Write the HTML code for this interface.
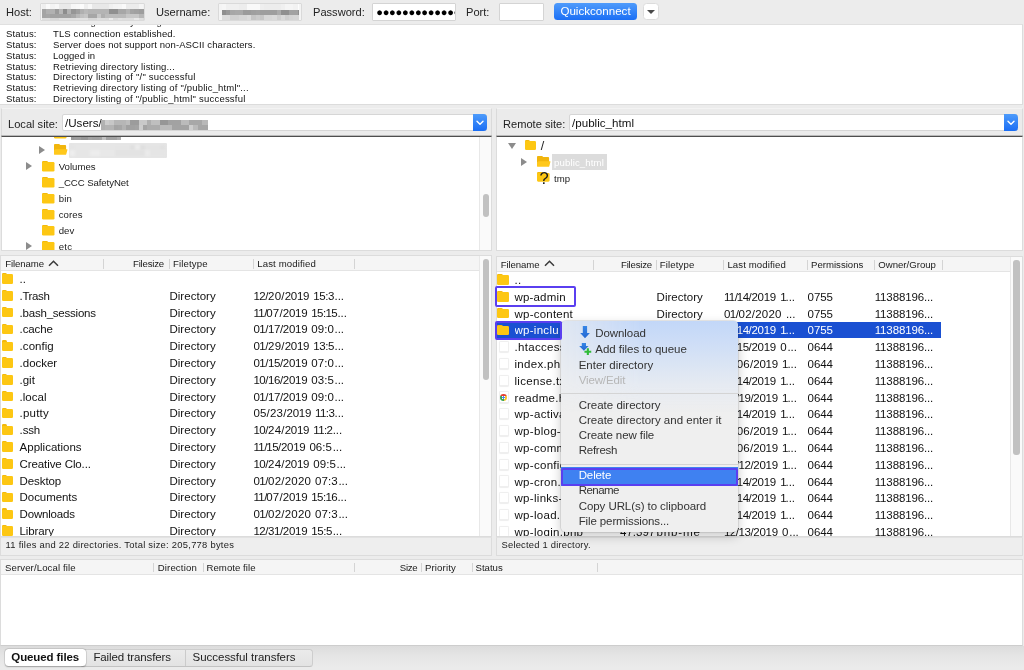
<!DOCTYPE html>
<html><head><meta charset="utf-8"><title>FileZilla</title>
<style>
*{box-sizing:border-box;margin:0;padding:0}
html,body{width:1024px;height:670px;overflow:hidden;background:#ececec;font-family:"Liberation Sans",sans-serif;color:#1c1c1c}
.abs{position:absolute}
div,span{position:absolute;white-space:pre}
.lbl{font-size:11.1px;line-height:14px;color:#222}
.inp{background:#fff;border:1px solid #d4d4d4;border-radius:1px}
.log{font-size:9.5px;line-height:11px;color:#111}
.white{background:#fff}
.tree{font-size:9.6px;line-height:12px;color:#1a1a1a}
.fold{width:11.5px;height:10.5px}
.fold:before{content:"";position:absolute;left:0;top:0;width:5.5px;height:4px;background:#f3b90b;border-radius:1.2px 1.5px 0 0}
.fold:after{content:"";position:absolute;left:0;top:1.2px;width:11.5px;height:9.3px;background:#fdc713;border-radius:0.8px 1.2px 1.2px 1.2px}
.hdr{font-size:9.6px;line-height:12px;color:#1a1a1a}
.row{font-size:11.5px;line-height:14px;color:#111}
.sep{width:1px;background:#d4d4d4}
.st{font-size:9.4px;line-height:12px;color:#222}
.file{width:9.6px;height:11.2px;background:#fff;border:1px solid #efefef;border-radius:1.5px;box-shadow:0 0.5px 1px rgba(0,0,0,.07)}
.mi{font-size:11.5px;line-height:14px;color:#333}
.tab{font-size:11.5px;line-height:14px;color:#222}
</style></head><body>
<div id="app" style="left:0;top:0;width:1024px;height:670px;will-change:transform;filter:blur(0.3px)">

<span class="lbl" style="left:6px;top:5px">Host:</span>
<div class="inp" style="left:40px;top:3px;width:105px;height:18px;background:#f4f4f4;border-color:#dadada"></div>
<div style="left:42.0px;top:4.0px;width:101.5px;height:5.3px;background:linear-gradient(90deg,#efefef 0.0px 4.2px,#fafafa 4.2px 8.4px,#f3f3f3 8.4px 12.6px,#f7f7f7 12.6px 16.8px,#eaeaea 16.8px 21.0px,#eaeaea 21.0px 25.2px,#eaeaea 25.2px 29.4px,#f7f7f7 29.4px 33.6px,#f9f9f9 33.6px 37.8px,#fcfcfc 37.8px 42.0px,#efefef 42.0px 46.2px,#f8f8f8 46.2px 50.4px,#e8e8e8 50.4px 54.6px,#e8e8e8 54.6px 58.8px,#e8e8e8 58.8px 63.0px,#e8e8e8 63.0px 67.2px,#f0f0f0 67.2px 71.4px,#f4f4f4 71.4px 75.6px,#f5f5f5 75.6px 79.8px,#fafafa 79.8px 84.0px,#ececec 84.0px 88.2px,#ececec 88.2px 92.4px,#ececec 92.4px 96.6px,#f5f5f5 96.6px 100.8px,#f1f1f1 100.8px 101.5px);filter:blur(0.5px)"></div><div style="left:42.0px;top:9.0px;width:101.5px;height:4.9px;background:linear-gradient(90deg,#a4a4a4 0.0px 4.2px,#b0b0b0 4.2px 8.4px,#b1b1b1 8.4px 12.6px,#9a9a9a 12.6px 16.8px,#b7b7b7 16.8px 21.0px,#8d8d8d 21.0px 25.2px,#b2b2b2 25.2px 29.4px,#969696 29.4px 33.6px,#a0a0a0 33.6px 37.8px,#b0b0b0 37.8px 42.0px,#b9b9b9 42.0px 46.2px,#b4b4b4 46.2px 50.4px,#b4b4b4 50.4px 54.6px,#b4b4b4 54.6px 58.8px,#b4b4b4 58.8px 63.0px,#b4b4b4 63.0px 67.2px,#909090 67.2px 71.4px,#909090 71.4px 75.6px,#a7a7a7 75.6px 79.8px,#a7a7a7 79.8px 84.0px,#b3b3b3 84.0px 88.2px,#a4a4a4 88.2px 92.4px,#a1a1a1 92.4px 96.6px,#9d9d9d 96.6px 100.8px,#9d9d9d 100.8px 101.5px);filter:blur(0.5px)"></div><div style="left:42.0px;top:13.6px;width:101.5px;height:4.9px;background:linear-gradient(90deg,#a4a4a4 0.0px 4.2px,#a6a6a6 4.2px 8.4px,#a2a2a2 8.4px 12.6px,#a2a2a2 12.6px 16.8px,#a2a2a2 16.8px 21.0px,#a2a2a2 21.0px 25.2px,#a2a2a2 25.2px 29.4px,#a8a8a8 29.4px 33.6px,#b8b8b8 33.6px 37.8px,#c1c1c1 37.8px 42.0px,#c6c6c6 42.0px 46.2px,#a6a6a6 46.2px 50.4px,#a6a6a6 50.4px 54.6px,#c8c8c8 54.6px 58.8px,#afafaf 58.8px 63.0px,#bbbbbb 63.0px 67.2px,#bbbbbb 67.2px 71.4px,#bbbbbb 71.4px 75.6px,#bababa 75.6px 79.8px,#bababa 79.8px 84.0px,#c7c7c7 84.0px 88.2px,#c7c7c7 88.2px 92.4px,#c7c7c7 92.4px 96.6px,#b6b6b6 96.6px 100.8px,#b6b6b6 100.8px 101.5px);filter:blur(0.5px)"></div><div style="left:42.0px;top:18.2px;width:101.5px;height:1.8px;background:linear-gradient(90deg,#dfdfdf 0.0px 4.2px,#dfdfdf 4.2px 8.4px,#d8d8d8 8.4px 12.6px,#d7d7d7 12.6px 16.8px,#dfdfdf 16.8px 21.0px,#e0e0e0 21.0px 25.2px,#e0e0e0 25.2px 29.4px,#e0e0e0 29.4px 33.6px,#e2e2e2 33.6px 37.8px,#e2e2e2 37.8px 42.0px,#e2e2e2 42.0px 46.2px,#d7d7d7 46.2px 50.4px,#d7d7d7 50.4px 54.6px,#dedede 54.6px 58.8px,#dedede 58.8px 63.0px,#dcdcdc 63.0px 67.2px,#ebebeb 67.2px 71.4px,#dadada 71.4px 75.6px,#e1e1e1 75.6px 79.8px,#dedede 79.8px 84.0px,#dedede 84.0px 88.2px,#dedede 88.2px 92.4px,#e9e9e9 92.4px 96.6px,#dedede 96.6px 100.8px,#d8d8d8 100.8px 101.5px);filter:blur(0.5px)"></div>
<span class="lbl" style="left:156px;top:5px">Username:</span>
<div class="inp" style="left:218px;top:3px;width:84px;height:18px;background:#f4f4f4;border-color:#dadada"></div>
<div style="left:221.5px;top:4.0px;width:77.0px;height:5.8px;background:linear-gradient(90deg,#f6f6f6 0.0px 4.2px,#f0f0f0 4.2px 8.4px,#f0f0f0 8.4px 12.6px,#f0f0f0 12.6px 16.8px,#ededed 16.8px 21.0px,#ededed 21.0px 25.2px,#f9f9f9 25.2px 29.4px,#f9f9f9 29.4px 33.6px,#f9f9f9 33.6px 37.8px,#efefef 37.8px 42.0px,#ededed 42.0px 46.2px,#ededed 46.2px 50.4px,#ededed 50.4px 54.6px,#ededed 54.6px 58.8px,#f0f0f0 58.8px 63.0px,#f5f5f5 63.0px 67.2px,#f5f5f5 67.2px 71.4px,#f2f2f2 71.4px 75.6px,#fdfdfd 75.6px 77.0px);filter:blur(0.5px)"></div><div style="left:221.5px;top:9.5px;width:77.0px;height:5.5px;background:linear-gradient(90deg,#8f8f8f 0.0px 4.2px,#999999 4.2px 8.4px,#a7a7a7 8.4px 12.6px,#a9a9a9 12.6px 16.8px,#a9a9a9 16.8px 21.0px,#9b9b9b 21.0px 25.2px,#9b9b9b 25.2px 29.4px,#9f9f9f 29.4px 33.6px,#a1a1a1 33.6px 37.8px,#9e9e9e 37.8px 42.0px,#9e9e9e 42.0px 46.2px,#9e9e9e 46.2px 50.4px,#9e9e9e 50.4px 54.6px,#ababab 54.6px 58.8px,#909090 58.8px 63.0px,#909090 63.0px 67.2px,#a2a2a2 67.2px 71.4px,#a2a2a2 71.4px 75.6px,#919191 75.6px 77.0px);filter:blur(0.5px)"></div><div style="left:221.5px;top:14.7px;width:77.0px;height:5.1px;background:linear-gradient(90deg,#dcdcdc 0.0px 4.2px,#dcdcdc 4.2px 8.4px,#d1d1d1 8.4px 12.6px,#d1d1d1 12.6px 16.8px,#d6d6d6 16.8px 21.0px,#d6d6d6 21.0px 25.2px,#dbdbdb 25.2px 29.4px,#c5c5c5 29.4px 33.6px,#cbcbcb 33.6px 37.8px,#c6c6c6 37.8px 42.0px,#d7d7d7 42.0px 46.2px,#d7d7d7 46.2px 50.4px,#dadada 50.4px 54.6px,#cfcfcf 54.6px 58.8px,#d9d9d9 58.8px 63.0px,#cfcfcf 63.0px 67.2px,#d4d4d4 67.2px 71.4px,#d6d6d6 71.4px 75.6px,#d6d6d6 75.6px 77.0px);filter:blur(0.5px)"></div>
<span class="lbl" style="left:313px;top:5px">Password:</span>
<div class="inp" style="left:372px;top:3px;width:84px;height:18px;overflow:hidden"><span style="left:3.2px;top:-1.2px;font-size:11.1px;line-height:18px;letter-spacing:-0.25px;color:#000">●●●●●●●●●●●●●●</span></div>
<span class="lbl" style="left:466px;top:5px">Port:</span>
<div class="inp" style="left:499px;top:3px;width:45px;height:18px"></div>
<div style="left:554px;top:3px;width:83px;height:17px;border-radius:3.5px;background:linear-gradient(#4f9bfb,#1b6ff5);color:#fff;font-size:11.6px;line-height:16px;text-align:center">Quickconnect</div>
<div style="left:643px;top:3px;width:15.5px;height:17px;border-radius:3.5px;background:#fff;border:1px solid #dcdcdc"><span style="left:2.8px;top:5.8px;width:0;height:0;border-left:4px solid transparent;border-right:4px solid transparent;border-top:4.2px solid #4a4a4a"></span></div>
<div class="white" style="left:0;top:24px;width:1023px;height:81px;border:1px solid #dcdcdc;border-top:1.5px solid #e0e0e0;border-left:none;overflow:hidden">
<span class="log" style="left:6px;top:-8.9px">Status:</span><span class="log" style="left:53px;top:-8.9px">Retrieving directory listing...</span>
<span class="log" style="left:6px;top:3.00px;letter-spacing:0.146px">Status:</span><span class="log" style="left:53px;top:3.00px;letter-spacing:0.116px">TLS connection established.</span>
<span class="log" style="left:6px;top:13.86px;letter-spacing:0.146px">Status:</span><span class="log" style="left:53px;top:13.86px;letter-spacing:0.111px">Server does not support non-ASCII characters.</span>
<span class="log" style="left:6px;top:24.72px;letter-spacing:0.146px">Status:</span><span class="log" style="left:53px;top:24.72px;letter-spacing:0.052px">Logged in</span>
<span class="log" style="left:6px;top:35.58px;letter-spacing:0.146px">Status:</span><span class="log" style="left:53px;top:35.58px;letter-spacing:0.171px">Retrieving directory listing...</span>
<span class="log" style="left:6px;top:46.44px;letter-spacing:0.146px">Status:</span><span class="log" style="left:53px;top:46.44px;letter-spacing:0.228px">Directory listing of &quot;/&quot; successful</span>
<span class="log" style="left:6px;top:57.30px;letter-spacing:0.146px">Status:</span><span class="log" style="left:53px;top:57.30px;letter-spacing:0.171px">Retrieving directory listing of &quot;/public_html&quot;...</span>
<span class="log" style="left:6px;top:68.16px;letter-spacing:0.146px">Status:</span><span class="log" style="left:53px;top:68.16px;letter-spacing:0.216px">Directory listing of &quot;/public_html&quot; successful</span>
</div>
<div style="left:1px;top:107.8px;width:491px;height:28.2px;background:#ebebeb;border:1px solid #dadada;border-top:1.2px solid #f3f3f3;border-bottom:none"></div>
<span class="lbl" style="left:8px;top:116.5px">Local site:</span>
<div class="inp" style="left:62px;top:114.2px;width:425px;height:16.6px;border-radius:2px;border-color:#d6d6d6"></div>
<span class="lbl" style="left:65px;top:116px;font-size:11.6px;color:#111">/Users/</span>
<div style="left:101.4px;top:119.8px;width:107.0px;height:5.0px;background:linear-gradient(90deg,#b2b2b2 0.0px 4.2px,#cdcdcd 4.2px 8.4px,#c7c7c7 8.4px 12.6px,#b6b6b6 12.6px 16.8px,#b6b6b6 16.8px 21.0px,#b6b6b6 21.0px 25.2px,#bdbdbd 25.2px 29.4px,#9c9c9c 29.4px 33.6px,#9c9c9c 33.6px 37.8px,#c9c9c9 37.8px 42.0px,#c9c9c9 42.0px 46.2px,#afafaf 46.2px 50.4px,#bfbfbf 50.4px 54.6px,#bfbfbf 54.6px 58.8px,#969696 58.8px 63.0px,#969696 63.0px 67.2px,#a2a2a2 67.2px 71.4px,#a2a2a2 71.4px 75.6px,#a2a2a2 75.6px 79.8px,#bbbbbb 79.8px 84.0px,#bbbbbb 84.0px 88.2px,#a8a8a8 88.2px 92.4px,#a8a8a8 92.4px 96.6px,#a8a8a8 96.6px 100.8px,#b9b9b9 100.8px 105.0px,#b9b9b9 105.0px 107.0px);filter:blur(0.5px)"></div><div style="left:101.4px;top:124.5px;width:107.0px;height:5.0px;background:linear-gradient(90deg,#b0b0b0 0.0px 4.2px,#b4b4b4 4.2px 8.4px,#b4b4b4 8.4px 12.6px,#a4a4a4 12.6px 16.8px,#a6a6a6 16.8px 21.0px,#b2b2b2 21.0px 25.2px,#a1a1a1 25.2px 29.4px,#a1a1a1 29.4px 33.6px,#a3a3a3 33.6px 37.8px,#cdcdcd 37.8px 42.0px,#a4a4a4 42.0px 46.2px,#acacac 46.2px 50.4px,#acacac 50.4px 54.6px,#acacac 54.6px 58.8px,#bababa 58.8px 63.0px,#bababa 63.0px 67.2px,#bababa 67.2px 71.4px,#a3a3a3 71.4px 75.6px,#a3a3a3 75.6px 79.8px,#a3a3a3 79.8px 84.0px,#a3a3a3 84.0px 88.2px,#cecece 88.2px 92.4px,#bababa 92.4px 96.6px,#a7a7a7 96.6px 100.8px,#a7a7a7 100.8px 105.0px,#a7a7a7 105.0px 107.0px);filter:blur(0.5px)"></div>
<div style="left:472.5px;top:114.2px;width:14.5px;height:16.6px;border-radius:0 3.5px 3.5px 0;background:linear-gradient(#4d9bfb,#1a6df4)"><svg class="abs" style="left:3.5px;top:5.6px" width="8" height="6" viewBox="0 0 8 6"><path d="M1 1.2 L4 4.2 L7 1.2" fill="none" stroke="#fff" stroke-width="1.4" stroke-linecap="round" stroke-linejoin="round"/></svg></div>
<div style="left:496px;top:107.8px;width:527px;height:28.2px;background:#ebebeb;border:1px solid #dadada;border-top:1.2px solid #f3f3f3;border-bottom:none"></div>
<span class="lbl" style="left:503px;top:116.5px">Remote site:</span>
<div class="inp" style="left:569px;top:114.2px;width:449px;height:16.6px;border-radius:2px;border-color:#d6d6d6"></div>
<span class="lbl" style="left:572px;top:116px;font-size:11.6px;color:#111;letter-spacing:0.010px">/public_html</span>
<div style="left:1003.5px;top:114.2px;width:14.5px;height:16.6px;border-radius:0 3.5px 3.5px 0;background:linear-gradient(#4d9bfb,#1a6df4)"><svg class="abs" style="left:3.5px;top:5.6px" width="8" height="6" viewBox="0 0 8 6"><path d="M1 1.2 L4 4.2 L7 1.2" fill="none" stroke="#fff" stroke-width="1.4" stroke-linecap="round" stroke-linejoin="round"/></svg></div>
<div class="white" style="left:1px;top:136px;width:491px;height:114.5px;border:1px solid #dcdcdc;border-top:1px solid #4e4e4e;box-shadow:0 -1px 0 #b9b9b9;overflow:hidden">
<div class="fold" style="left:52px;top:-9.0px;transform:scale(1.04,1.05);transform-origin:0 0"></div>
<div style="left:69.0px;top:-2.2px;width:50.0px;height:2.7px;background:linear-gradient(90deg,#9f9f9f 0.0px 3.5px,#888888 3.5px 7.0px,#aaaaaa 7.0px 10.5px,#adadad 10.5px 14.0px,#adadad 14.0px 17.5px,#959595 17.5px 21.0px,#878787 21.0px 24.5px,#878787 24.5px 28.0px,#969696 28.0px 31.5px,#909090 31.5px 35.0px,#909090 35.0px 38.5px,#909090 38.5px 42.0px,#909090 42.0px 45.5px,#afafaf 45.5px 49.0px,#828282 49.0px 50.0px);filter:blur(0.6px)"></div><div style="left:69.0px;top:0.2px;width:50.0px;height:2.7px;background:linear-gradient(90deg,#9a9a9a 0.0px 3.5px,#9e9e9e 3.5px 7.0px,#9e9e9e 7.0px 10.5px,#969696 10.5px 14.0px,#969696 14.0px 17.5px,#a3a3a3 17.5px 21.0px,#a0a0a0 21.0px 24.5px,#a0a0a0 24.5px 28.0px,#a2a2a2 28.0px 31.5px,#c1c1c1 31.5px 35.0px,#a1a1a1 35.0px 38.5px,#a1a1a1 38.5px 42.0px,#a1a1a1 42.0px 45.5px,#adadad 45.5px 49.0px,#adadad 49.0px 50.0px);filter:blur(0.6px)"></div>
<span style="left:37px;top:8.800000000000011px;width:0;height:0;border-top:4.2px solid transparent;border-bottom:4.2px solid transparent;border-left:6.5px solid #8c8c8c"></span>
<svg class="abs" style="left:52.3px;top:7.300000000000011px" width="14" height="11" viewBox="0 0 14 11"><path d="M0.9 0h4.2l1.2 1.1h4.9a0.9 0.9 0 0 1 .9 .9v5.5H0V0.9A0.9 0.9 0 0 1 .9 0z" fill="#f1b50c"/><path d="M1.6 5.2h11.4a.5 .5 0 0 1 .45 .65l-1.2 4.3a.9 .9 0 0 1-.85 .65H0.9A0.9 .9 0 0 1 0 9.9V6.3z" fill="#ffc81b"/></svg>
<div style="left:66.9px;top:5.5px;width:97.8px;height:15.1px;background:#e6e6e6;border-radius:1px"></div>
<div style="left:68.0px;top:7.5px;width:95.0px;height:5.8px;background:linear-gradient(90deg,#e5e5e5 0.0px 5.0px,#e7e7e7 5.0px 10.0px,#e7e7e7 10.0px 15.0px,#e7e7e7 15.0px 20.0px,#e6e6e6 20.0px 25.0px,#e6e6e6 25.0px 30.0px,#e6e6e6 30.0px 35.0px,#e6e6e6 35.0px 40.0px,#e6e6e6 40.0px 45.0px,#e5e5e5 45.0px 50.0px,#e5e5e5 50.0px 55.0px,#e5e5e5 55.0px 60.0px,#e0e0e0 60.0px 65.0px,#ececec 65.0px 70.0px,#dfdfdf 70.0px 75.0px,#e4e4e4 75.0px 80.0px,#e4e4e4 80.0px 85.0px,#e4e4e4 85.0px 90.0px,#e1e1e1 90.0px 95.0px,#e4e4e4 95.0px 95.0px);filter:blur(0.8px)"></div><div style="left:68.0px;top:13.0px;width:95.0px;height:5.8px;background:linear-gradient(90deg,#eeeeee 0.0px 5.0px,#e6e6e6 5.0px 10.0px,#e6e6e6 10.0px 15.0px,#e6e6e6 15.0px 20.0px,#ededed 20.0px 25.0px,#ededed 25.0px 30.0px,#e8e8e8 30.0px 35.0px,#e8e8e8 35.0px 40.0px,#e8e8e8 40.0px 45.0px,#e3e3e3 45.0px 50.0px,#e3e3e3 50.0px 55.0px,#e3e3e3 55.0px 60.0px,#e3e3e3 60.0px 65.0px,#e3e3e3 65.0px 70.0px,#e2e2e2 70.0px 75.0px,#ebebeb 75.0px 80.0px,#e5e5e5 80.0px 85.0px,#e5e5e5 85.0px 90.0px,#e5e5e5 90.0px 95.0px,#e5e5e5 95.0px 95.0px);filter:blur(0.8px)"></div>
<span style="left:24.3px;top:25.099999999999994px;width:0;height:0;border-top:4.2px solid transparent;border-bottom:4.2px solid transparent;border-left:6.5px solid #8c8c8c"></span>
<div class="fold" style="left:40px;top:23.80000000000001px;transform:scale(1.04,1.05);transform-origin:0 0"></div>
<span class="tree" style="left:56.7px;top:24.30000000000001px;letter-spacing:0.029px">Volumes</span>
<div class="fold" style="left:40px;top:39.80000000000001px;transform:scale(1.04,1.05);transform-origin:0 0"></div>
<span class="tree" style="left:56.7px;top:40.30000000000001px;letter-spacing:-0.066px">_CCC SafetyNet</span>
<div class="fold" style="left:40px;top:55.80000000000001px;transform:scale(1.04,1.05);transform-origin:0 0"></div>
<span class="tree" style="left:56.7px;top:56.30000000000001px;letter-spacing:0.229px">bin</span>
<div class="fold" style="left:40px;top:71.80000000000001px;transform:scale(1.04,1.05);transform-origin:0 0"></div>
<span class="tree" style="left:56.7px;top:72.30000000000001px;letter-spacing:0.106px">cores</span>
<div class="fold" style="left:40px;top:87.80000000000001px;transform:scale(1.04,1.05);transform-origin:0 0"></div>
<span class="tree" style="left:56.7px;top:88.30000000000001px;letter-spacing:0.010px">dev</span>
<span style="left:24.3px;top:105.1px;width:0;height:0;border-top:4.2px solid transparent;border-bottom:4.2px solid transparent;border-left:6.5px solid #8c8c8c"></span>
<div class="fold" style="left:40px;top:103.80000000000001px;transform:scale(1.04,1.05);transform-origin:0 0"></div>
<span class="tree" style="left:56.7px;top:104.30000000000001px;letter-spacing:0.229px">etc</span>
<div style="left:477px;top:0;width:12px;height:115px;background:#fafafa;border-left:1px solid #e8e8e8"></div>
<div style="left:480.5px;top:57.0px;width:6px;height:23px;border-radius:3px;background:#c1c1c1"></div>
</div>
<div class="white" style="left:496px;top:136px;width:527px;height:114.5px;border:1px solid #dcdcdc;border-top:1px solid #4e4e4e;box-shadow:0 -1px 0 #b9b9b9;overflow:hidden">
<span style="left:10.800000000000011px;top:6.400000000000006px;width:0;height:0;border-left:4px solid transparent;border-right:4px solid transparent;border-top:6.2px solid #8c8c8c"></span>
<div class="fold" style="left:27.700000000000045px;top:3.0px"></div>
<span class="tree" style="left:43.799999999999955px;top:3.4000000000000057px;font-size:12.5px">/</span>
<span style="left:24.200000000000045px;top:21.099999999999994px;width:0;height:0;border-top:4.2px solid transparent;border-bottom:4.2px solid transparent;border-left:6.5px solid #8c8c8c"></span>
<svg class="abs" style="left:40px;top:18.599999999999994px" width="14" height="11" viewBox="0 0 14 11"><path d="M0.9 0h4.2l1.2 1.1h4.9a0.9 0.9 0 0 1 .9 .9v5.5H0V0.9A0.9 0.9 0 0 1 .9 0z" fill="#f1b50c"/><path d="M1.6 5.2h11.4a.5 .5 0 0 1 .45 .65l-1.2 4.3a.9 .9 0 0 1-.85 .65H0.9A0.9 .9 0 0 1 0 9.9V6.3z" fill="#ffc81b"/></svg>
<div style="left:55px;top:17.0px;width:55px;height:15.5px;background:#dcdcdc"></div><span class="tree" style="left:57px;top:19.80000000000001px;color:#fff;letter-spacing:0.134px">public_html</span>
<div class="fold" style="left:40px;top:35.099999999999994px;transform:scale(1.05,0.97);transform-origin:0 0"></div>
<span style="left:42.5px;top:32.650000000000006px;font-size:16.5px;line-height:16px;color:#1a1a1a">?</span>
<span class="tree" style="left:57px;top:36.30000000000001px">tmp</span>
</div>
<div class="white" style="left:0px;top:255.2px;width:492px;height:282.3px;border:1px solid #dcdcdc;overflow:hidden">
<div style="left:0;top:0;width:600px;height:14.6px;background:#f5f5f5;border-bottom:1px solid #e4e4e4"></div>
<span class="hdr" style="left:4.2px;top:1.8px;letter-spacing:-0.084px">Filename</span>
<span class="hdr" style="left:132px;top:1.8px;letter-spacing:-0.191px">Filesize</span>
<span class="hdr" style="left:172px;top:1.8px;letter-spacing:0.138px">Filetype</span>
<span class="hdr" style="left:256.3px;top:1.8px;letter-spacing:0.118px">Last modified</span>
<div class="sep" style="left:101.5px;top:2.5px;height:10px"></div>
<div class="sep" style="left:168px;top:2.5px;height:10px"></div>
<div class="sep" style="left:252px;top:2.5px;height:10px"></div>
<div class="sep" style="left:353px;top:2.5px;height:10px"></div>
<svg class="abs" style="left:46.7px;top:3.8000000000000114px" width="11" height="7" viewBox="0 0 11 7"><path d="M1 5.8 L5.5 1.2 L10 5.8" fill="none" stroke="#3a3a3a" stroke-width="1.5"/></svg>
<div class="fold" style="left:0.8px;top:17.10px"></div>
<span class="row" style="left:18.6px;top:15.75px">..</span>
<div class="fold" style="left:0.8px;top:33.90px"></div>
<span class="row" style="left:18.6px;top:32.55px;letter-spacing:-0.395px">.Trash</span>
<span class="row" style="left:168.4px;top:32.55px;letter-spacing:0.043px">Directory</span><span class="row" style="left:252.40px;top:32.55px;color:#111;letter-spacing:-0.433px">12/</span><span class="row" style="left:267.10px;top:32.55px;color:#111;letter-spacing:0.200px">20/</span><span class="row" style="left:283.70px;top:32.55px;color:#111;letter-spacing:-0.273px">2019</span><span class="row" style="left:312.20px;top:32.55px;color:#111;letter-spacing:-0.398px">15:3</span><span class="row" style="left:333.60px;top:32.55px;color:#111;letter-spacing:-0.068px">...</span>
<div class="fold" style="left:0.8px;top:50.70px"></div>
<span class="row" style="left:18.6px;top:49.35px;letter-spacing:-0.220px">.bash_sessions</span>
<span class="row" style="left:168.4px;top:49.35px;letter-spacing:0.043px">Directory</span><span class="row" style="left:252.40px;top:49.35px;color:#111;letter-spacing:-0.600px">11/</span><span class="row" style="left:265.20px;top:49.35px;color:#111;letter-spacing:0.200px">07/</span><span class="row" style="left:281.80px;top:49.35px;color:#111;letter-spacing:-0.273px">2019</span><span class="row" style="left:310.30px;top:49.35px;color:#111;letter-spacing:-0.600px">15:15</span><span class="row" style="left:336.40px;top:49.35px;color:#111;letter-spacing:-0.068px">...</span>
<div class="fold" style="left:0.8px;top:67.50px"></div>
<span class="row" style="left:18.6px;top:66.15px;letter-spacing:-0.115px">.cache</span>
<span class="row" style="left:168.4px;top:66.15px;letter-spacing:0.043px">Directory</span><span class="row" style="left:252.40px;top:66.15px;color:#111;letter-spacing:-0.433px">01/</span><span class="row" style="left:267.10px;top:66.15px;color:#111;letter-spacing:-0.433px">17/</span><span class="row" style="left:281.80px;top:66.15px;color:#111;letter-spacing:-0.273px">2019</span><span class="row" style="left:310.30px;top:66.15px;color:#111;letter-spacing:0.077px">09:0</span><span class="row" style="left:333.60px;top:66.15px;color:#111;letter-spacing:-0.068px">...</span>
<div class="fold" style="left:0.8px;top:84.30px"></div>
<span class="row" style="left:18.6px;top:82.95px;letter-spacing:0.044px">.config</span>
<span class="row" style="left:168.4px;top:82.95px;letter-spacing:0.043px">Directory</span><span class="row" style="left:252.40px;top:82.95px;color:#111;letter-spacing:-0.433px">01/</span><span class="row" style="left:267.10px;top:82.95px;color:#111;letter-spacing:0.200px">29/</span><span class="row" style="left:283.70px;top:82.95px;color:#111;letter-spacing:-0.273px">2019</span><span class="row" style="left:312.20px;top:82.95px;color:#111;letter-spacing:-0.398px">13:5</span><span class="row" style="left:333.60px;top:82.95px;color:#111;letter-spacing:-0.068px">...</span>
<div class="fold" style="left:0.8px;top:101.10px"></div>
<span class="row" style="left:18.6px;top:99.75px;letter-spacing:-0.017px">.docker</span>
<span class="row" style="left:168.4px;top:99.75px;letter-spacing:0.043px">Directory</span><span class="row" style="left:252.40px;top:99.75px;color:#111;letter-spacing:-0.433px">01/</span><span class="row" style="left:267.10px;top:99.75px;color:#111;letter-spacing:-0.433px">15/</span><span class="row" style="left:281.80px;top:99.75px;color:#111;letter-spacing:-0.273px">2019</span><span class="row" style="left:310.30px;top:99.75px;color:#111;letter-spacing:0.077px">07:0</span><span class="row" style="left:333.60px;top:99.75px;color:#111;letter-spacing:-0.068px">...</span>
<div class="fold" style="left:0.8px;top:117.90px"></div>
<span class="row" style="left:18.6px;top:116.55px;letter-spacing:-0.036px">.git</span>
<span class="row" style="left:168.4px;top:116.55px;letter-spacing:0.043px">Directory</span><span class="row" style="left:252.40px;top:116.55px;color:#111;letter-spacing:-0.433px">10/</span><span class="row" style="left:267.10px;top:116.55px;color:#111;letter-spacing:-0.433px">16/</span><span class="row" style="left:281.80px;top:116.55px;color:#111;letter-spacing:-0.273px">2019</span><span class="row" style="left:310.30px;top:116.55px;color:#111;letter-spacing:0.077px">03:5</span><span class="row" style="left:333.60px;top:116.55px;color:#111;letter-spacing:-0.068px">...</span>
<div class="fold" style="left:0.8px;top:134.70px"></div>
<span class="row" style="left:18.6px;top:133.35px;letter-spacing:0.007px">.local</span>
<span class="row" style="left:168.4px;top:133.35px;letter-spacing:0.043px">Directory</span><span class="row" style="left:252.40px;top:133.35px;color:#111;letter-spacing:-0.433px">01/</span><span class="row" style="left:267.10px;top:133.35px;color:#111;letter-spacing:-0.433px">17/</span><span class="row" style="left:281.80px;top:133.35px;color:#111;letter-spacing:-0.273px">2019</span><span class="row" style="left:310.30px;top:133.35px;color:#111;letter-spacing:0.077px">09:0</span><span class="row" style="left:333.60px;top:133.35px;color:#111;letter-spacing:-0.068px">...</span>
<div class="fold" style="left:0.8px;top:151.50px"></div>
<span class="row" style="left:18.6px;top:150.15px;letter-spacing:0.193px">.putty</span>
<span class="row" style="left:168.4px;top:150.15px;letter-spacing:0.043px">Directory</span><span class="row" style="left:252.40px;top:150.15px;color:#111;letter-spacing:0.200px">05/</span><span class="row" style="left:269.00px;top:150.15px;color:#111;letter-spacing:0.200px">23/</span><span class="row" style="left:285.60px;top:150.15px;color:#111;letter-spacing:-0.273px">2019</span><span class="row" style="left:314.10px;top:150.15px;color:#111;letter-spacing:-0.600px">11:3</span><span class="row" style="left:333.60px;top:150.15px;color:#111;letter-spacing:-0.068px">...</span>
<div class="fold" style="left:0.8px;top:168.30px"></div>
<span class="row" style="left:18.6px;top:166.95px;letter-spacing:-0.148px">.ssh</span>
<span class="row" style="left:168.4px;top:166.95px;letter-spacing:0.043px">Directory</span><span class="row" style="left:252.40px;top:166.95px;color:#111;letter-spacing:-0.433px">10/</span><span class="row" style="left:267.10px;top:166.95px;color:#111;letter-spacing:0.200px">24/</span><span class="row" style="left:283.70px;top:166.95px;color:#111;letter-spacing:-0.273px">2019</span><span class="row" style="left:312.20px;top:166.95px;color:#111;letter-spacing:-0.600px">11:2</span><span class="row" style="left:331.70px;top:166.95px;color:#111;letter-spacing:-0.068px">...</span>
<div class="fold" style="left:0.8px;top:185.10px"></div>
<span class="row" style="left:18.6px;top:183.75px;letter-spacing:-0.001px">Applications</span>
<span class="row" style="left:168.4px;top:183.75px;letter-spacing:0.043px">Directory</span><span class="row" style="left:252.40px;top:183.75px;color:#111;letter-spacing:-0.600px">11/</span><span class="row" style="left:265.20px;top:183.75px;color:#111;letter-spacing:-0.433px">15/</span><span class="row" style="left:279.90px;top:183.75px;color:#111;letter-spacing:-0.273px">2019</span><span class="row" style="left:308.40px;top:183.75px;color:#111;letter-spacing:0.077px">06:5</span><span class="row" style="left:331.70px;top:183.75px;color:#111;letter-spacing:-0.068px">...</span>
<div class="fold" style="left:0.8px;top:201.90px"></div>
<span class="row" style="left:18.6px;top:200.55px;letter-spacing:-0.104px">Creative Clo...</span>
<span class="row" style="left:168.4px;top:200.55px;letter-spacing:0.043px">Directory</span><span class="row" style="left:252.40px;top:200.55px;color:#111;letter-spacing:-0.433px">10/</span><span class="row" style="left:267.10px;top:200.55px;color:#111;letter-spacing:0.200px">24/</span><span class="row" style="left:283.70px;top:200.55px;color:#111;letter-spacing:-0.273px">2019</span><span class="row" style="left:312.20px;top:200.55px;color:#111;letter-spacing:0.077px">09:5</span><span class="row" style="left:335.50px;top:200.55px;color:#111;letter-spacing:-0.068px">...</span>
<div class="fold" style="left:0.8px;top:218.70px"></div>
<span class="row" style="left:18.6px;top:217.35px;letter-spacing:-0.098px">Desktop</span>
<span class="row" style="left:168.4px;top:217.35px;letter-spacing:0.043px">Directory</span><span class="row" style="left:252.40px;top:217.35px;color:#111;letter-spacing:-0.433px">01/</span><span class="row" style="left:267.10px;top:217.35px;color:#111;letter-spacing:0.200px">02/</span><span class="row" style="left:283.70px;top:217.35px;color:#111;letter-spacing:0.202px">2020</span><span class="row" style="left:314.10px;top:217.35px;color:#111;letter-spacing:0.077px">07:3</span><span class="row" style="left:337.40px;top:217.35px;color:#111;letter-spacing:-0.068px">...</span>
<div class="fold" style="left:0.8px;top:235.50px"></div>
<span class="row" style="left:18.6px;top:234.15px;letter-spacing:-0.064px">Documents</span>
<span class="row" style="left:168.4px;top:234.15px;letter-spacing:0.043px">Directory</span><span class="row" style="left:252.40px;top:234.15px;color:#111;letter-spacing:-0.600px">11/</span><span class="row" style="left:265.20px;top:234.15px;color:#111;letter-spacing:0.200px">07/</span><span class="row" style="left:281.80px;top:234.15px;color:#111;letter-spacing:-0.273px">2019</span><span class="row" style="left:310.30px;top:234.15px;color:#111;letter-spacing:-0.600px">15:16</span><span class="row" style="left:336.40px;top:234.15px;color:#111;letter-spacing:-0.068px">...</span>
<div class="fold" style="left:0.8px;top:252.30px"></div>
<span class="row" style="left:18.6px;top:250.95px;letter-spacing:-0.190px">Downloads</span>
<span class="row" style="left:168.4px;top:250.95px;letter-spacing:0.043px">Directory</span><span class="row" style="left:252.40px;top:250.95px;color:#111;letter-spacing:-0.433px">01/</span><span class="row" style="left:267.10px;top:250.95px;color:#111;letter-spacing:0.200px">02/</span><span class="row" style="left:283.70px;top:250.95px;color:#111;letter-spacing:0.202px">2020</span><span class="row" style="left:314.10px;top:250.95px;color:#111;letter-spacing:0.077px">07:3</span><span class="row" style="left:337.40px;top:250.95px;color:#111;letter-spacing:-0.068px">...</span>
<div class="fold" style="left:0.8px;top:269.10px"></div>
<span class="row" style="left:18.6px;top:267.75px;letter-spacing:-0.137px">Library</span>
<span class="row" style="left:168.4px;top:267.75px;letter-spacing:0.043px">Directory</span><span class="row" style="left:252.40px;top:267.75px;color:#111;letter-spacing:-0.433px">12/</span><span class="row" style="left:267.10px;top:267.75px;color:#111;letter-spacing:-0.433px">31/</span><span class="row" style="left:281.80px;top:267.75px;color:#111;letter-spacing:-0.273px">2019</span><span class="row" style="left:310.30px;top:267.75px;color:#111;letter-spacing:-0.398px">15:5</span><span class="row" style="left:331.70px;top:267.75px;color:#111;letter-spacing:-0.068px">...</span>
<div style="left:478px;top:0;width:13px;height:282px;background:#fafafa;border-left:1px solid #e8e8e8"></div>
<div style="left:481.8px;top:2.8000000000000114px;width:6px;height:121px;border-radius:3px;background:#c1c1c1"></div>
</div>
<div class="white" style="left:495.5px;top:256.2px;width:527.5px;height:281.3px;border:1px solid #dcdcdc;overflow:hidden">
<div style="left:0;top:0;width:600px;height:14.6px;background:#f5f5f5;border-bottom:1px solid #e4e4e4"></div>
<span class="hdr" style="left:4.199999999999989px;top:1.8px;letter-spacing:-0.084px">Filename</span>
<span class="hdr" style="left:124.5px;top:1.8px;letter-spacing:-0.191px">Filesize</span>
<span class="hdr" style="left:163.20000000000005px;top:1.8px;letter-spacing:0.138px">Filetype</span>
<span class="hdr" style="left:230.89999999999998px;top:1.8px;letter-spacing:0.111px">Last modified</span>
<span class="hdr" style="left:314.5px;top:1.8px;letter-spacing:0.005px">Permissions</span>
<span class="hdr" style="left:381.79999999999995px;top:1.8px;letter-spacing:0.001px">Owner/Group</span>
<div class="sep" style="left:96.79999999999995px;top:2.5px;height:10px"></div>
<div class="sep" style="left:159.5px;top:2.5px;height:10px"></div>
<div class="sep" style="left:226.79999999999995px;top:2.5px;height:10px"></div>
<div class="sep" style="left:310.5px;top:2.5px;height:10px"></div>
<div class="sep" style="left:377.9px;top:2.5px;height:10px"></div>
<div class="sep" style="left:445.0px;top:2.5px;height:10px"></div>
<svg class="abs" style="left:47.200000000000045px;top:2.8000000000000114px" width="11" height="7" viewBox="0 0 11 7"><path d="M1 5.8 L5.5 1.2 L10 5.8" fill="none" stroke="#3a3a3a" stroke-width="1.5"/></svg>
<div class="fold" style="left:0.6000000000000227px;top:17.10px"></div>
<span class="row" style="left:18.0px;top:15.75px;color:#111;letter-spacing:0.3px">..</span>
<div class="fold" style="left:0.6000000000000227px;top:33.90px"></div>
<span class="row" style="left:18.0px;top:32.55px;color:#111;letter-spacing:0.168px">wp-admin</span>
<span class="row" style="left:160.10000000000002px;top:32.55px;color:#111;letter-spacing:0.020px">Directory</span>
<span class="row" style="left:227.40px;top:32.55px;color:#111;letter-spacing:-0.600px">11/</span><span class="row" style="left:240.20px;top:32.55px;color:#111;letter-spacing:-0.433px">14/</span><span class="row" style="left:254.90px;top:32.55px;color:#111;letter-spacing:-0.273px">2019</span><span class="row" style="left:283.70px;top:32.55px;color:#111;letter-spacing:-0.600px">1</span><span class="row" style="left:289.00px;top:32.55px;color:#111;letter-spacing:-0.068px">...</span>
<span class="row" style="left:311.1px;top:32.55px;color:#111;letter-spacing:-0.098px">0755</span>
<span class="row" style="left:378.20000000000005px;top:32.55px;color:#111;letter-spacing:-0.128px">11388196...</span>
<div class="fold" style="left:0.6000000000000227px;top:50.70px"></div>
<span class="row" style="left:18.0px;top:49.35px;color:#111;letter-spacing:0.223px">wp-content</span>
<span class="row" style="left:160.10000000000002px;top:49.35px;color:#111;letter-spacing:0.020px">Directory</span>
<span class="row" style="left:227.40px;top:49.35px;color:#111;letter-spacing:-0.433px">01/</span><span class="row" style="left:242.10px;top:49.35px;color:#111;letter-spacing:0.200px">02/</span><span class="row" style="left:258.70px;top:49.35px;color:#111;letter-spacing:0.202px">2020</span><span class="row" style="left:289.40px;top:49.35px;color:#111;letter-spacing:-0.068px">...</span>
<span class="row" style="left:311.1px;top:49.35px;color:#111;letter-spacing:-0.098px">0755</span>
<span class="row" style="left:378.20000000000005px;top:49.35px;color:#111;letter-spacing:-0.128px">11388196...</span>
<div style="left:0;top:64.6px;width:444.79999999999995px;height:16.5px;background:#1a50d2"></div>
<div class="fold" style="left:0.6000000000000227px;top:67.50px"></div>
<div style="left:18.0px;top:66.15px;width:44.6px;height:14px;overflow:hidden"><span class="row" style="left:0;top:0;color:#fff;letter-spacing:0.277px">wp-includes</span></div>
<span class="row" style="left:160.10000000000002px;top:66.15px;color:#fff;letter-spacing:0.020px">Directory</span>
<span class="row" style="left:227.40px;top:66.15px;color:#fff;letter-spacing:-0.600px">11/</span><span class="row" style="left:240.20px;top:66.15px;color:#fff;letter-spacing:-0.433px">14/</span><span class="row" style="left:254.90px;top:66.15px;color:#fff;letter-spacing:-0.273px">2019</span><span class="row" style="left:283.70px;top:66.15px;color:#fff;letter-spacing:-0.600px">1</span><span class="row" style="left:289.00px;top:66.15px;color:#fff;letter-spacing:-0.068px">...</span>
<span class="row" style="left:311.1px;top:66.15px;color:#fff;letter-spacing:-0.098px">0755</span>
<span class="row" style="left:378.20000000000005px;top:66.15px;color:#fff;letter-spacing:-0.128px">11388196...</span>
<div class="file" style="left:2.6000000000000227px;top:83.85px"></div>
<span class="row" style="left:18.0px;top:82.95px;color:#111;letter-spacing:0.3px">.htaccess</span>
<span class="row" style="left:227.40px;top:82.95px;color:#111;letter-spacing:-0.600px">11/</span><span class="row" style="left:240.20px;top:82.95px;color:#111;letter-spacing:-0.433px">15/</span><span class="row" style="left:254.90px;top:82.95px;color:#111;letter-spacing:-0.273px">2019</span><span class="row" style="left:283.70px;top:82.95px;color:#111;letter-spacing:0.194px">0</span><span class="row" style="left:290.90px;top:82.95px;color:#111;letter-spacing:-0.068px">...</span>
<span class="row" style="left:311.1px;top:82.95px;color:#111;letter-spacing:-0.098px">0644</span>
<span class="row" style="left:378.20000000000005px;top:82.95px;color:#111;letter-spacing:-0.128px">11388196...</span>
<div class="file" style="left:2.6000000000000227px;top:100.65px"></div>
<span class="row" style="left:18.0px;top:99.75px;color:#111;letter-spacing:0.3px">index.php</span>
<span class="row" style="left:227.40px;top:99.75px;color:#111;letter-spacing:-0.600px">11/</span><span class="row" style="left:240.20px;top:99.75px;color:#111;letter-spacing:0.200px">06/</span><span class="row" style="left:256.80px;top:99.75px;color:#111;letter-spacing:-0.273px">2019</span><span class="row" style="left:285.60px;top:99.75px;color:#111;letter-spacing:-0.600px">1</span><span class="row" style="left:290.90px;top:99.75px;color:#111;letter-spacing:-0.068px">...</span>
<span class="row" style="left:311.1px;top:99.75px;color:#111;letter-spacing:-0.098px">0644</span>
<span class="row" style="left:378.20000000000005px;top:99.75px;color:#111;letter-spacing:-0.128px">11388196...</span>
<div class="file" style="left:2.6000000000000227px;top:117.45px"></div>
<span class="row" style="left:18.0px;top:116.55px;color:#111;letter-spacing:0.3px">license.txt</span>
<span class="row" style="left:227.40px;top:116.55px;color:#111;letter-spacing:-0.600px">11/</span><span class="row" style="left:240.20px;top:116.55px;color:#111;letter-spacing:-0.433px">14/</span><span class="row" style="left:254.90px;top:116.55px;color:#111;letter-spacing:-0.273px">2019</span><span class="row" style="left:283.70px;top:116.55px;color:#111;letter-spacing:-0.600px">1</span><span class="row" style="left:289.00px;top:116.55px;color:#111;letter-spacing:-0.068px">...</span>
<span class="row" style="left:311.1px;top:116.55px;color:#111;letter-spacing:-0.098px">0644</span>
<span class="row" style="left:378.20000000000005px;top:116.55px;color:#111;letter-spacing:-0.128px">11388196...</span>
<div class="file" style="left:2.6000000000000227px;top:134.25px"></div>
<div style="left:3.8000000000000114px;top:136.65px;width:6.8px;height:6.8px;border-radius:3.4px;background:radial-gradient(circle,#4a86e8 0 1.2px,#fff 1.3px 1.9px,transparent 2px),conic-gradient(from 300deg,#e34133 0 33%,#f6c12d 0 66%,#3ba453 0)"></div>
<span class="row" style="left:18.0px;top:133.35px;color:#111;letter-spacing:0.3px">readme.html</span>
<span class="row" style="left:227.40px;top:133.35px;color:#111;letter-spacing:-0.433px">12/</span><span class="row" style="left:242.10px;top:133.35px;color:#111;letter-spacing:-0.433px">19/</span><span class="row" style="left:256.80px;top:133.35px;color:#111;letter-spacing:-0.273px">2019</span><span class="row" style="left:285.60px;top:133.35px;color:#111;letter-spacing:-0.600px">1</span><span class="row" style="left:290.90px;top:133.35px;color:#111;letter-spacing:-0.068px">...</span>
<span class="row" style="left:311.1px;top:133.35px;color:#111;letter-spacing:-0.098px">0644</span>
<span class="row" style="left:378.20000000000005px;top:133.35px;color:#111;letter-spacing:-0.128px">11388196...</span>
<div class="file" style="left:2.6000000000000227px;top:151.05px"></div>
<span class="row" style="left:18.0px;top:150.15px;color:#111;letter-spacing:0.3px">wp-activate...</span>
<span class="row" style="left:227.40px;top:150.15px;color:#111;letter-spacing:-0.600px">11/</span><span class="row" style="left:240.20px;top:150.15px;color:#111;letter-spacing:-0.433px">14/</span><span class="row" style="left:254.90px;top:150.15px;color:#111;letter-spacing:-0.273px">2019</span><span class="row" style="left:283.70px;top:150.15px;color:#111;letter-spacing:-0.600px">1</span><span class="row" style="left:289.00px;top:150.15px;color:#111;letter-spacing:-0.068px">...</span>
<span class="row" style="left:311.1px;top:150.15px;color:#111;letter-spacing:-0.098px">0644</span>
<span class="row" style="left:378.20000000000005px;top:150.15px;color:#111;letter-spacing:-0.128px">11388196...</span>
<div class="file" style="left:2.6000000000000227px;top:167.85px"></div>
<span class="row" style="left:18.0px;top:166.95px;color:#111;letter-spacing:0.3px">wp-blog-he...</span>
<span class="row" style="left:227.40px;top:166.95px;color:#111;letter-spacing:-0.600px">11/</span><span class="row" style="left:240.20px;top:166.95px;color:#111;letter-spacing:0.200px">06/</span><span class="row" style="left:256.80px;top:166.95px;color:#111;letter-spacing:-0.273px">2019</span><span class="row" style="left:285.60px;top:166.95px;color:#111;letter-spacing:-0.600px">1</span><span class="row" style="left:290.90px;top:166.95px;color:#111;letter-spacing:-0.068px">...</span>
<span class="row" style="left:311.1px;top:166.95px;color:#111;letter-spacing:-0.098px">0644</span>
<span class="row" style="left:378.20000000000005px;top:166.95px;color:#111;letter-spacing:-0.128px">11388196...</span>
<div class="file" style="left:2.6000000000000227px;top:184.65px"></div>
<span class="row" style="left:18.0px;top:183.75px;color:#111;letter-spacing:0.3px">wp-comme...</span>
<span class="row" style="left:227.40px;top:183.75px;color:#111;letter-spacing:-0.600px">11/</span><span class="row" style="left:240.20px;top:183.75px;color:#111;letter-spacing:0.200px">06/</span><span class="row" style="left:256.80px;top:183.75px;color:#111;letter-spacing:-0.273px">2019</span><span class="row" style="left:285.60px;top:183.75px;color:#111;letter-spacing:-0.600px">1</span><span class="row" style="left:290.90px;top:183.75px;color:#111;letter-spacing:-0.068px">...</span>
<span class="row" style="left:311.1px;top:183.75px;color:#111;letter-spacing:-0.098px">0644</span>
<span class="row" style="left:378.20000000000005px;top:183.75px;color:#111;letter-spacing:-0.128px">11388196...</span>
<div class="file" style="left:2.6000000000000227px;top:201.45px"></div>
<span class="row" style="left:18.0px;top:200.55px;color:#111;letter-spacing:0.3px">wp-config....</span>
<span class="row" style="left:227.40px;top:200.55px;color:#111;letter-spacing:-0.433px">12/</span><span class="row" style="left:242.10px;top:200.55px;color:#111;letter-spacing:-0.433px">12/</span><span class="row" style="left:256.80px;top:200.55px;color:#111;letter-spacing:-0.273px">2019</span><span class="row" style="left:285.60px;top:200.55px;color:#111;letter-spacing:-0.600px">1</span><span class="row" style="left:290.90px;top:200.55px;color:#111;letter-spacing:-0.068px">...</span>
<span class="row" style="left:311.1px;top:200.55px;color:#111;letter-spacing:-0.098px">0644</span>
<span class="row" style="left:378.20000000000005px;top:200.55px;color:#111;letter-spacing:-0.128px">11388196...</span>
<div class="file" style="left:2.6000000000000227px;top:218.25px"></div>
<span class="row" style="left:18.0px;top:217.35px;color:#111;letter-spacing:0.3px">wp-cron.php</span>
<span class="row" style="left:227.40px;top:217.35px;color:#111;letter-spacing:-0.600px">11/</span><span class="row" style="left:240.20px;top:217.35px;color:#111;letter-spacing:-0.433px">14/</span><span class="row" style="left:254.90px;top:217.35px;color:#111;letter-spacing:-0.273px">2019</span><span class="row" style="left:283.70px;top:217.35px;color:#111;letter-spacing:-0.600px">1</span><span class="row" style="left:289.00px;top:217.35px;color:#111;letter-spacing:-0.068px">...</span>
<span class="row" style="left:311.1px;top:217.35px;color:#111;letter-spacing:-0.098px">0644</span>
<span class="row" style="left:378.20000000000005px;top:217.35px;color:#111;letter-spacing:-0.128px">11388196...</span>
<div class="file" style="left:2.6000000000000227px;top:235.05px"></div>
<span class="row" style="left:18.0px;top:234.15px;color:#111;letter-spacing:0.3px">wp-links-o...</span>
<span class="row" style="left:227.40px;top:234.15px;color:#111;letter-spacing:-0.600px">11/</span><span class="row" style="left:240.20px;top:234.15px;color:#111;letter-spacing:-0.433px">14/</span><span class="row" style="left:254.90px;top:234.15px;color:#111;letter-spacing:-0.273px">2019</span><span class="row" style="left:283.70px;top:234.15px;color:#111;letter-spacing:-0.600px">1</span><span class="row" style="left:289.00px;top:234.15px;color:#111;letter-spacing:-0.068px">...</span>
<span class="row" style="left:311.1px;top:234.15px;color:#111;letter-spacing:-0.098px">0644</span>
<span class="row" style="left:378.20000000000005px;top:234.15px;color:#111;letter-spacing:-0.128px">11388196...</span>
<div class="file" style="left:2.6000000000000227px;top:251.85px"></div>
<span class="row" style="left:18.0px;top:250.95px;color:#111;letter-spacing:0.3px">wp-load.php</span>
<span class="row" style="left:227.40px;top:250.95px;color:#111;letter-spacing:-0.600px">11/</span><span class="row" style="left:240.20px;top:250.95px;color:#111;letter-spacing:-0.433px">14/</span><span class="row" style="left:254.90px;top:250.95px;color:#111;letter-spacing:-0.273px">2019</span><span class="row" style="left:283.70px;top:250.95px;color:#111;letter-spacing:-0.600px">1</span><span class="row" style="left:289.00px;top:250.95px;color:#111;letter-spacing:-0.068px">...</span>
<span class="row" style="left:311.1px;top:250.95px;color:#111;letter-spacing:-0.098px">0644</span>
<span class="row" style="left:378.20000000000005px;top:250.95px;color:#111;letter-spacing:-0.128px">11388196...</span>
<div class="file" style="left:2.6000000000000227px;top:268.65px"></div>
<span class="row" style="left:18.0px;top:267.75px;color:#111;letter-spacing:0.3px">wp-login.php</span>
<span class="row" style="left:123.5px;top:267.75px">47,397</span>
<span class="row" style="left:160.10000000000002px;top:267.75px;color:#111;letter-spacing:0.800px">php-file</span>
<span class="row" style="left:227.40px;top:267.75px;color:#111;letter-spacing:-0.433px">12/</span><span class="row" style="left:242.10px;top:267.75px;color:#111;letter-spacing:-0.433px">13/</span><span class="row" style="left:256.80px;top:267.75px;color:#111;letter-spacing:-0.273px">2019</span><span class="row" style="left:285.60px;top:267.75px;color:#111;letter-spacing:0.194px">0</span><span class="row" style="left:292.80px;top:267.75px;color:#111;letter-spacing:-0.068px">...</span>
<span class="row" style="left:311.1px;top:267.75px;color:#111;letter-spacing:-0.098px">0644</span>
<span class="row" style="left:378.20000000000005px;top:267.75px;color:#111;letter-spacing:-0.128px">11388196...</span>
<div style="left:513.0px;top:0;width:14px;height:282px;background:#fafafa;border-left:1px solid #e8e8e8"></div>
<div style="left:516.8px;top:2.8000000000000114px;width:6.4px;height:195.5px;border-radius:3px;background:#c1c1c1"></div>
</div>
<div style="left:0;top:537px;width:492px;height:18.6px;background:#eeeeee;border:1px solid #dcdcdc;border-top:1px solid #e2e2e2"></div><span class="st" style="left:5.5px;top:538.9px;letter-spacing:0.265px">11 files and 22 directories. Total size: 205,778 bytes</span>
<div style="left:495.5px;top:537px;width:527.5px;height:18.6px;background:#eeeeee;border:1px solid #dcdcdc;border-top:1px solid #e2e2e2"></div><span class="st" style="left:501.5px;top:538.9px;letter-spacing:0.211px">Selected 1 directory.</span>
<div style="left:560.8px;top:320.6px;width:177px;height:211.2px;background:#efefef;border-radius:4.5px;box-shadow:0 0 0 0.5px rgba(0,0,0,.15),0 4px 11px rgba(0,0,0,.22);overflow:hidden">
<div style="left:0;top:0;width:177px;height:92px;background:linear-gradient(to bottom,rgb(194,215,248),rgb(205,221,247) 22%,rgb(217,228,244) 45%,rgb(229,234,242) 68%,rgba(239,239,239,0));-webkit-mask-image:linear-gradient(90deg,rgba(0,0,0,.35),#000 45%);mask-image:linear-gradient(90deg,rgba(0,0,0,.35),#000 45%)"></div>
<div style="left:0;top:72.59999999999997px;width:177px;height:1px;background:#d4d4d4"></div>
<div style="left:0;top:143.0px;width:177px;height:1px;background:#d4d4d4"></div>
<span class="mi" style="left:34.5px;top:5.60px;color:#333;letter-spacing:-0.082px">Download</span>
<span class="mi" style="left:34.5px;top:21.80px;color:#333;letter-spacing:-0.032px">Add files to queue</span>
<span class="mi" style="left:17.90000000000009px;top:37.00px;color:#333;letter-spacing:-0.019px">Enter directory</span>
<span class="mi" style="left:17.90000000000009px;top:52.00px;color:#b6b6b6;letter-spacing:-0.137px">View/Edit</span>
<span class="mi" style="left:17.90000000000009px;top:77.30px;color:#333;letter-spacing:-0.001px">Create directory</span>
<span class="mi" style="left:17.90000000000009px;top:92.40px;color:#333;letter-spacing:0.009px">Create directory and enter it</span>
<span class="mi" style="left:17.90000000000009px;top:107.20px;color:#333;letter-spacing:-0.081px">Create new file</span>
<span class="mi" style="left:17.90000000000009px;top:122.30px;color:#333;letter-spacing:-0.254px">Refresh</span>
<div style="left:0;top:146.89999999999998px;width:177px;height:18.3px;background:#3f81f1"></div>
<span class="mi" style="left:17.90000000000009px;top:147.70px;color:#fff;letter-spacing:-0.125px">Delete</span>
<span class="mi" style="left:17.90000000000009px;top:162.70px;color:#333;letter-spacing:-0.545px">Rename</span>
<span class="mi" style="left:17.90000000000009px;top:178.00px;color:#333;letter-spacing:-0.067px">Copy URL(s) to clipboard</span>
<span class="mi" style="left:17.90000000000009px;top:193.00px;color:#333;letter-spacing:-0.114px">File permissions...</span>
<svg class="abs" style="left:19.200000000000045px;top:5.399999999999977px" width="11" height="13" viewBox="0 0 11 13"><defs><linearGradient id="ga" x1="0" y1="0" x2="0" y2="1"><stop offset="0" stop-color="#3786e6"/><stop offset="1" stop-color="#2468d2"/></linearGradient></defs><path d="M2.8 0h4.3v7.1h2.8L5 12.2 0.2 7.1h2.6z" fill="url(#ga)"/></svg>
<svg class="abs" style="left:17.800000000000068px;top:22.399999999999977px" width="14" height="13" viewBox="0 0 14 13"><path d="M2.8 0h4.2v3.1h2.6L4.9 7.7 0.2 3.1h2.6z" fill="url(#ga)"/><path d="M7.8 5.3h2.1v2.35h2.35v2.1H9.9v2.35H7.8V9.75H5.45v-2.1H7.8z" fill="#30bb38"/></svg>
</div>
<div style="left:560.7px;top:467.5px;width:177.2px;height:18.3px;border:2px solid #5a3ff0;border-radius:2px"></div>
<div style="left:494.9px;top:286px;width:81.2px;height:21px;border:2px solid #5a3ff0;border-radius:2px"></div>
<div style="left:494.9px;top:321.2px;width:67px;height:19.2px;border:2px solid #5a3ff0;border-radius:2px"></div>
<div class="white" style="left:0;top:559px;width:1023px;height:87px;border:1px solid #dcdcdc;border-bottom-color:#cdcdcd;overflow:hidden">
<div style="left:0;top:0;width:1023px;height:14.5px;background:#f5f5f5;border-bottom:1px solid #e4e4e4"></div>
<span class="hdr" style="left:4px;top:1.8px;letter-spacing:0.112px">Server/Local file</span>
<span class="hdr" style="left:156.7px;top:1.8px;letter-spacing:0.149px">Direction</span>
<span class="hdr" style="left:205.5px;top:1.8px;letter-spacing:0.052px">Remote file</span>
<span class="hdr" style="left:398.8px;top:1.8px;letter-spacing:-0.268px">Size</span>
<span class="hdr" style="left:424px;top:1.8px;letter-spacing:0.130px">Priority</span>
<span class="hdr" style="left:474.5px;top:1.8px;letter-spacing:-0.001px">Status</span>
<div class="sep" style="left:151.7px;top:3px;height:9px"></div>
<div class="sep" style="left:201.5px;top:3px;height:9px"></div>
<div class="sep" style="left:353.3px;top:3px;height:9px"></div>
<div class="sep" style="left:420.3px;top:3px;height:9px"></div>
<div class="sep" style="left:470.8px;top:3px;height:9px"></div>
<div class="sep" style="left:596.3px;top:3px;height:9px"></div>
</div>
<div style="left:0;top:646px;width:1024px;height:24px;background:linear-gradient(#dcdcdc,#e5e5e5 40%,#ebebeb 90%)"></div>
<div style="left:80px;top:649px;width:233px;height:18px;background:linear-gradient(#ebebeb,#e3e3e3);border:1px solid #cdcdcd;border-bottom-color:#c2c2c2;border-radius:3.5px"></div>
<div style="left:185px;top:650px;width:1px;height:16px;background:#cbcbcb"></div>
<div style="left:5px;top:649px;width:81px;height:17px;background:#fff;border-radius:3.5px;box-shadow:0 0 0 0.5px rgba(0,0,0,.12),0 0.5px 1.5px rgba(0,0,0,.28)"></div>
<span class="tab" style="left:11.3px;top:650px;font-weight:bold;color:#111;letter-spacing:-0.103px">Queued files</span>
<span class="tab" style="left:93.4px;top:650px;letter-spacing:-0.110px">Failed transfers</span>
<span class="tab" style="left:192.6px;top:650px;letter-spacing:-0.032px">Successful transfers</span>
</div>
</body></html>
